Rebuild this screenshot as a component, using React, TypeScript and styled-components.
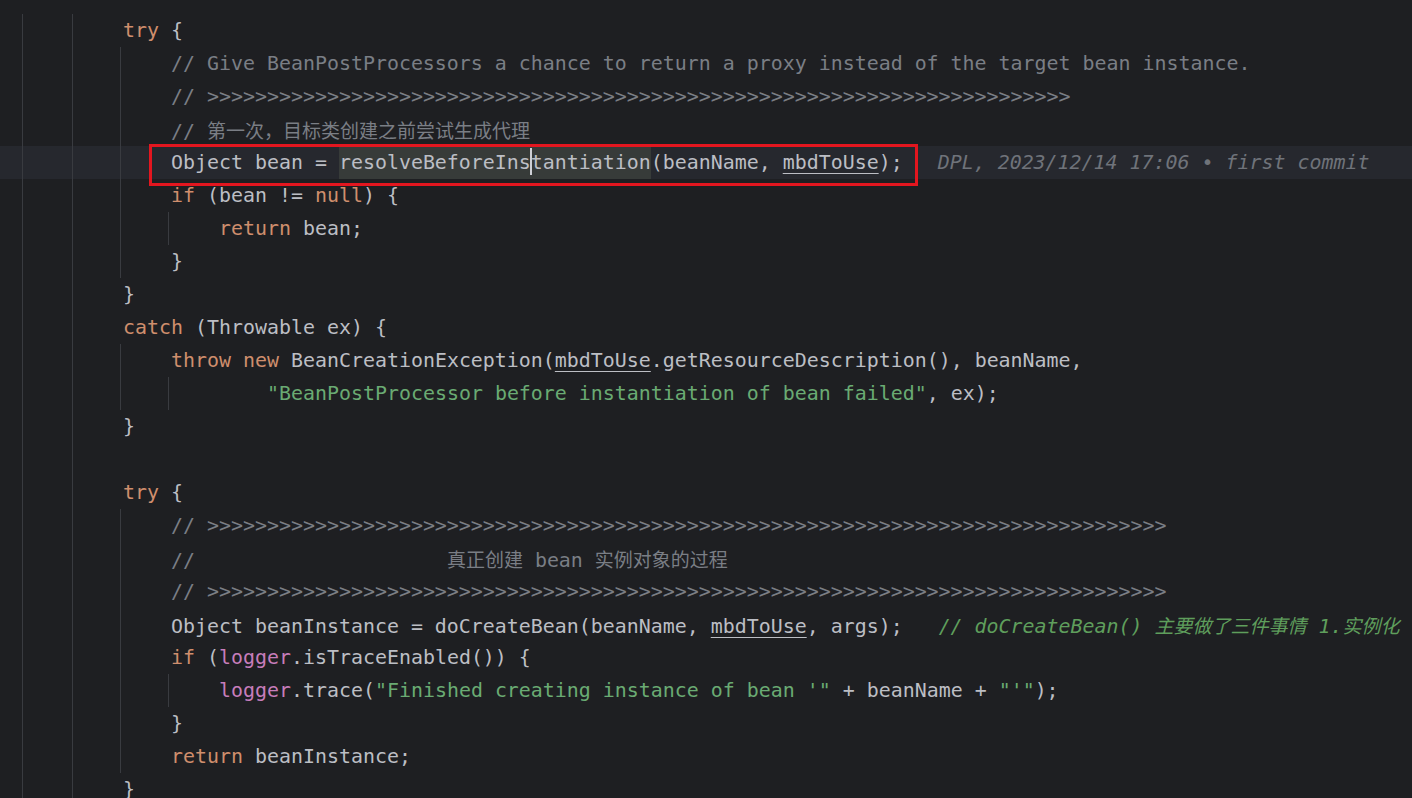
import React from 'react';
import styled, { createGlobalStyle } from 'styled-components';

const GlobalStyle = createGlobalStyle`
  * {
    box-sizing: border-box;
  }
  html, body {
    margin: 0;
    padding: 0;
    background: #1e1f22;
  }
  body {
    width: 1412px;
    height: 798px;
    overflow: hidden;
  }
`;

const Editor = styled.div`
  width: 1412px;
  height: 798px;
  overflow: hidden;
  padding-top: 14px;
  background: #1e1f22;
  font-family: "DejaVu Sans Mono", "Liberation Mono", monospace;
  font-size: 19.93px;
  color: #bcbec4;
`;

const LineRow = styled.div<{ $current?: boolean }>`
  display: flex;
  align-items: stretch;
  height: 33px;
  padding-left: 22px;
  white-space: pre;
  background: ${({ $current }) => ($current ? '#26282e' : 'transparent')};
`;

const Guide = styled.span<{ $on: boolean }>`
  flex: 0 0 48px;
  border-left: 1px solid ${({ $on }) => ($on ? '#393b40' : 'transparent')};

  &:first-child {
    flex-basis: 50px;
  }
`;

const Code = styled.span`
  padding-left: 3px;
  line-height: 33px;
  white-space: pre;
`;

const Kw = styled.span`
  color: #cf8e6d;
`;

const Comment = styled.span`
  color: #7a7e85;
`;

const Str = styled.span`
  color: #6aab73;
`;

const Field = styled.span`
  color: #c77dbb;
`;

const Reassigned = styled.span`
  text-decoration: underline;
  text-decoration-thickness: 1px;
  text-underline-offset: 4px;
`;

const Han = styled.span`
  font-family: "Noto Sans CJK SC", sans-serif;
  font-size: 19px;
`;

const GreenNote = styled.span`
  color: #5f9e5c;
  font-style: italic;
`;

const Boxed = styled.span`
  position: relative;
  display: inline-block;
  height: 33px;
  line-height: 33px;

  &::after {
    content: '';
    position: absolute;
    left: -22px;
    right: -15px;
    top: -2px;
    bottom: -7px;
    border: 3px solid #e3161f;
    pointer-events: none;
  }
`;

const Usage = styled.span`
  display: inline-block;
  height: 33px;
  line-height: 33px;
  background: #373b39;
`;

const Caret = styled.span`
  display: inline-block;
  width: 2px;
  height: 27px;
  margin: 0 -1px;
  vertical-align: -6px;
  background: #ced0d6;
`;

const Blame = styled.span`
  margin-left: 35px;
  line-height: 33px;
  color: #6f737a;
  font-style: italic;
`;

type RowProps = {
  g: string;
  current?: boolean;
  children?: React.ReactNode;
};

// g: one char per indent level, '1' draws the indent guide
const Row: React.FC<RowProps> = ({ g, current, children }) => (
  <LineRow $current={current}>
    {g.split('').map((c, i) => (
      <Guide key={i} $on={c === '1'} />
    ))}
    <Code>{children}</Code>
  </LineRow>
);

const arrows = (n: number) => '>'.repeat(n);

const App: React.FC = () => {
  return (
    <>
      <GlobalStyle />
      <Editor>
        <Row g="11">
          <Kw>try</Kw> {'{'}
        </Row>
        <Row g="111">
          <Comment>// Give BeanPostProcessors a chance to return a proxy instead of the target bean instance.</Comment>
        </Row>
        <Row g="111">
          <Comment>// {arrows(72)}</Comment>
        </Row>
        <Row g="111">
          <Comment>
            // <Han>第一次，目标类创建之前尝试生成代理</Han>
          </Comment>
        </Row>
        <LineRow $current>
          <Guide $on />
          <Guide $on />
          <Guide $on />
          <Code>
            <Boxed>
              Object bean = <Usage>resolveBeforeIns<Caret />tantiation</Usage>(beanName, <Reassigned>mbdToUse</Reassigned>);
            </Boxed>
          </Code>
          <Blame>DPL, 2023/12/14 17:06 • first commit</Blame>
        </LineRow>
        <Row g="111">
          <Kw>if</Kw> (bean != <Kw>null</Kw>) {'{'}
        </Row>
        <Row g="1111">
          <Kw>return</Kw> bean;
        </Row>
        <Row g="111">{'}'}</Row>
        <Row g="11">{'}'}</Row>
        <Row g="11">
          <Kw>catch</Kw> (Throwable ex) {'{'}
        </Row>
        <Row g="111">
          <Kw>throw</Kw> <Kw>new</Kw> BeanCreationException(<Reassigned>mbdToUse</Reassigned>.getResourceDescription(), beanName,
        </Row>
        <Row g="11110">
          <Str>"BeanPostProcessor before instantiation of bean failed"</Str>, ex);
        </Row>
        <Row g="11">{'}'}</Row>
        <Row g="11" />
        <Row g="11">
          <Kw>try</Kw> {'{'}
        </Row>
        <Row g="111">
          <Comment>// {arrows(80)}</Comment>
        </Row>
        <Row g="111">
          <Comment>
            //{' '.repeat(21)}<Han>真正创建</Han> bean <Han>实例对象的过程</Han>
          </Comment>
        </Row>
        <Row g="111">
          <Comment>// {arrows(80)}</Comment>
        </Row>
        <Row g="111">
          Object beanInstance = doCreateBean(beanName, <Reassigned>mbdToUse</Reassigned>, args);{'   '}
          <GreenNote>
            // doCreateBean() <Han>主要做了三件事情</Han> 1.<Han>实例化</Han>
          </GreenNote>
        </Row>
        <Row g="111">
          <Kw>if</Kw> (<Field>logger</Field>.isTraceEnabled()) {'{'}
        </Row>
        <Row g="1111">
          <Field>logger</Field>.trace(<Str>"Finished creating instance of bean '"</Str> + beanName + <Str>"'"</Str>);
        </Row>
        <Row g="111">{'}'}</Row>
        <Row g="111">
          <Kw>return</Kw> beanInstance;
        </Row>
        <Row g="11">{'}'}</Row>
      </Editor>
    </>
  );
};

export default App;
